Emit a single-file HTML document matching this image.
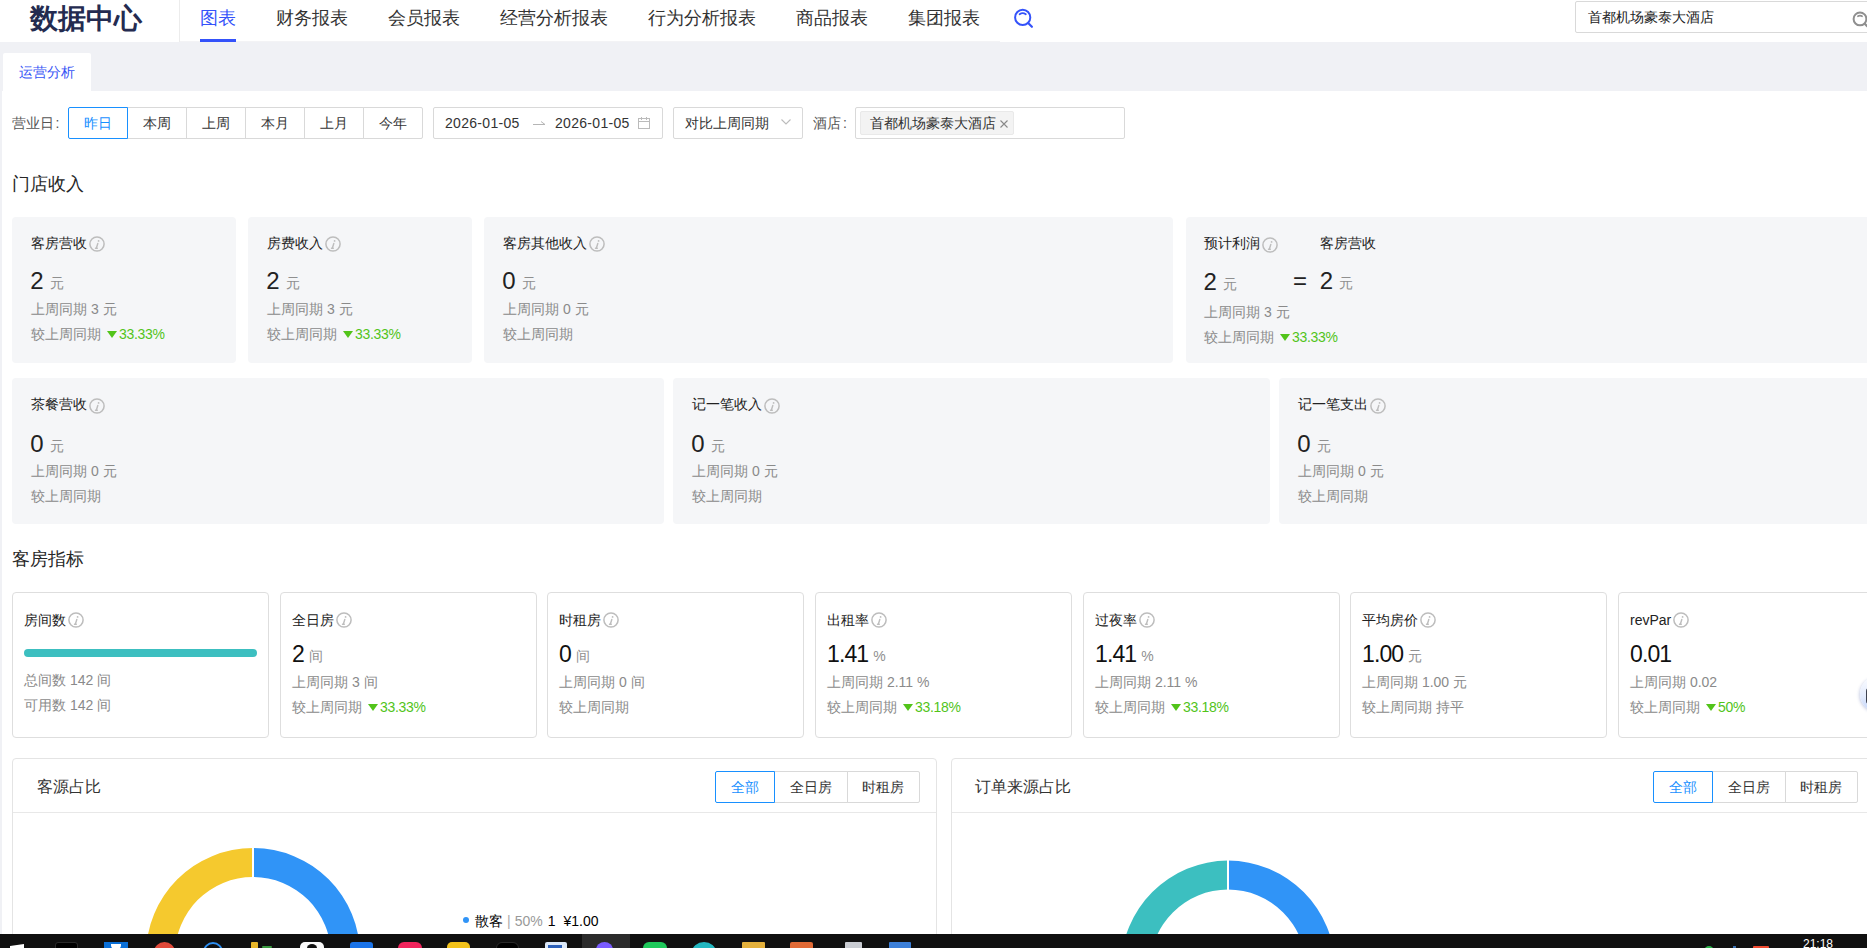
<!DOCTYPE html>
<html><head><meta charset="utf-8">
<style>
*{box-sizing:border-box}
html,body{margin:0;padding:0}
body{width:1867px;height:948px;overflow:hidden;position:relative;background:#fff;font-family:"Liberation Sans",sans-serif;color:#333}
.a{position:absolute;white-space:nowrap;line-height:1}
.nav{position:absolute;top:0;left:0;width:1867px;height:42px;background:#fff}
.logo{left:30px;top:5px;font-size:27.5px;font-weight:bold;color:#242b50}
.ni{top:8.5px;font-size:18px;color:#333}
.band{position:absolute;top:42px;left:0;width:1867px;height:49px;background:#f0f1f5}
.strip{position:absolute;top:91px;left:0;width:2px;height:843px;background:#f0f1f5}
.btns{position:absolute;height:32px;display:flex}
.btn{height:32px;border:1px solid #d9d9d9;margin-left:-1px;font-size:14px;color:#333;display:flex;align-items:center;justify-content:center;background:#fff;padding-top:2px}
.btn:first-child{margin-left:0;border-radius:2px 0 0 2px}
.btn:last-child{border-radius:0 2px 2px 0}
.btn.on{border-color:#1890ff;color:#1890ff;position:relative;z-index:1}
.box{position:absolute;border:1px solid #d9d9d9;border-radius:2px;background:#fff}
.h2{font-size:18px;color:#262626}
.card{position:absolute;background:#f5f6f8;border-radius:4px}
.bcard{position:absolute;background:#fff;border:1px solid #dedede;border-radius:4px}
.t{font-size:14px;color:#222}
.num{font-size:24px;color:#222}
.unit{font-size:14px;color:#8f8f8f;margin-left:6px;vertical-align:1px}
.sub{font-size:14px;color:#8a8a8a}
.up{color:#52c41a;letter-spacing:-0.3px}
.tri{display:inline-block;width:0;height:0;border-left:5px solid transparent;border-right:5px solid transparent;border-top:7px solid #52c41a;margin:0 2px 0 6px;vertical-align:1px}
.ii{display:inline-block;vertical-align:-3px;margin-left:2px;position:relative;top:0.8px}
.panel{position:absolute;top:758px;height:200px;border:1px solid #e4e4e4;border-radius:4px;background:#fff}
.ph{position:absolute;left:0;top:53px;width:100%;height:1px;background:#e8e8e8}
.task{position:absolute;left:0;top:934px;width:1867px;height:14px;background:#101010;overflow:hidden}
.ic{position:absolute;top:8px;height:12px;border-radius:3px}
</style></head><body>

<!-- NAV -->
<div class="nav"></div>
<div class="a logo">数据中心</div>
<div class="a" style="left:179px;top:0;width:1px;height:42px;background:#ececec"></div>
<div class="a" style="left:180px;top:41px;width:820px;height:1px;background:#f3f3f5"></div>
<div class="a ni" style="left:200px;color:#3452fa">图表</div>
<div class="a" style="left:200px;top:39px;width:36px;height:3px;background:#3452fa"></div>
<div class="a ni" style="left:276px">财务报表</div>
<div class="a ni" style="left:388px">会员报表</div>
<div class="a ni" style="left:500px">经营分析报表</div>
<div class="a ni" style="left:648px">行为分析报表</div>
<div class="a ni" style="left:796px">商品报表</div>
<div class="a ni" style="left:908px">集团报表</div>
<svg class="a" style="left:1012px;top:6px" width="24" height="24" viewBox="0 0 24 24"><circle cx="10.7" cy="11.4" r="7.6" fill="none" stroke="#3452fa" stroke-width="2"/><path d="M7.6 8.3 Q10.7 6.1 13.8 8.3" fill="none" stroke="#3452fa" stroke-width="1.8" stroke-linecap="round"/><path d="M16.4 17.3 L19.9 20.8" stroke="#3452fa" stroke-width="2.2" stroke-linecap="round"/></svg>

<div class="box" style="left:1575px;top:1px;width:310px;height:32px;border-radius:2px"></div>
<div class="a t" style="left:1588px;top:10px;color:#222">首都机场豪泰大酒店</div>
<svg class="a" style="left:1850px;top:9px" width="20" height="20" viewBox="0 0 20 20"><circle cx="10" cy="9.9" r="6.4" fill="none" stroke="#8f8f8f" stroke-width="2"/><path d="M7.3 7.6 Q10 5.7 12.7 7.6" fill="none" stroke="#8f8f8f" stroke-width="1.6"/><path d="M14.6 14.6 L19 19" stroke="#8f8f8f" stroke-width="2.2"/></svg>

<!-- BAND -->
<div class="band"></div>
<div class="a" style="left:3px;top:53px;width:88px;height:38px;background:#fff;border-radius:2px 2px 0 0"></div>
<div class="a t" style="left:19px;top:65px;color:#3352f5">运营分析</div>
<div class="strip"></div>


<!-- FILTER -->
<div class="a t" style="left:12px;top:116px;color:#555">营业日<span style="margin-left:1.5px">:</span></div>
<div class="btns" style="left:68px;top:107px">
<div class="btn on" style="width:60px">昨日</div><div class="btn" style="width:60px">本周</div><div class="btn" style="width:60px">上周</div><div class="btn" style="width:60px">本月</div><div class="btn" style="width:60px">上月</div><div class="btn" style="width:60px">今年</div>
</div>
<div class="box" style="left:433px;top:107px;width:230px;height:32px"></div>
<div class="a t" style="left:445px;top:116px;color:#333;letter-spacing:0.3px">2026-01-05</div>
<svg class="a" style="left:532px;top:119px" width="16" height="8" viewBox="0 0 16 8"><path d="M1 5.5 H13 L9 2.5" fill="none" stroke="#b5b5b5" stroke-width="1"/></svg>
<div class="a t" style="left:555px;top:116px;color:#333;letter-spacing:0.3px">2026-01-05</div>
<svg class="a" style="left:637px;top:116px" width="14" height="14" viewBox="0 0 14 14"><rect x="1.5" y="2.5" width="11" height="10" fill="none" stroke="#bbb" stroke-width="1"/><path d="M1.5 5.5H12.5M4.5 1V4M9.5 1V4" stroke="#bbb" stroke-width="1"/></svg>
<div class="box" style="left:673px;top:107px;width:130px;height:32px"></div>
<div class="a t" style="left:685px;top:116px;color:#333">对比上周同期</div>
<svg class="a" style="left:780px;top:117px" width="12" height="10" viewBox="0 0 12 10"><path d="M1.5 2.5 L6 7 L10.5 2.5" fill="none" stroke="#bbb" stroke-width="1.1"/></svg>
<div class="a t" style="left:813px;top:116px;color:#555">酒店<span style="margin-left:2px">:</span></div>
<div class="box" style="left:855px;top:107px;width:270px;height:32px"></div>
<div class="a" style="left:860px;top:111px;width:154px;height:24px;background:#f3f3f3;border:1px solid #e9e9e9;border-radius:2px"></div>
<div class="a t" style="left:870px;top:116px;color:#333">首都机场豪泰大酒店</div>
<svg class="a" style="left:999px;top:119px" width="10" height="10" viewBox="0 0 10 10"><path d="M1.5 1.5 L8.5 8.5 M8.5 1.5 L1.5 8.5" stroke="#888" stroke-width="1.1"/></svg>

<div class="a h2" style="left:12px;top:175px">门店收入</div>
<div class="a h2" style="left:12px;top:550px">客房指标</div>

<!-- ROW1 -->
<div class="card" style="left:12px;top:217px;width:224px;height:146px"></div>
<div class="a t" style="left:31px;top:235px">客房营收<svg class="ii" style="top:0.8px" width="16" height="16" viewBox="0 0 16 16"><circle cx="8" cy="8" r="7.1" fill="none" stroke="#bdbdbd" stroke-width="1.5"/><circle cx="9.6" cy="4.9" r="0.9" fill="#bdbdbd"/><path d="M8.8 7.5 L7.3 12.2 M6.5 12.3 H8.3" stroke="#bdbdbd" stroke-width="1.4" stroke-linecap="round"/></svg></div>
<div class="a num" style="left:30.2px;top:269px">2<span class="unit">元</span></div>
<div class="a sub" style="left:31px;top:302px">上周同期 3 元</div>
<div class="a sub" style="left:31px;top:327px">较上周同期<span class="tri"></span><span class="up">33.33%</span></div>
<div class="card" style="left:248px;top:217px;width:224px;height:146px"></div>
<div class="a t" style="left:267px;top:235px">房费收入<svg class="ii" style="top:0.8px" width="16" height="16" viewBox="0 0 16 16"><circle cx="8" cy="8" r="7.1" fill="none" stroke="#bdbdbd" stroke-width="1.5"/><circle cx="9.6" cy="4.9" r="0.9" fill="#bdbdbd"/><path d="M8.8 7.5 L7.3 12.2 M6.5 12.3 H8.3" stroke="#bdbdbd" stroke-width="1.4" stroke-linecap="round"/></svg></div>
<div class="a num" style="left:266.2px;top:269px">2<span class="unit">元</span></div>
<div class="a sub" style="left:267px;top:302px">上周同期 3 元</div>
<div class="a sub" style="left:267px;top:327px">较上周同期<span class="tri"></span><span class="up">33.33%</span></div>
<div class="card" style="left:484px;top:217px;width:689px;height:146px"></div>
<div class="a t" style="left:503px;top:235px">客房其他收入<svg class="ii" style="top:0.8px" width="16" height="16" viewBox="0 0 16 16"><circle cx="8" cy="8" r="7.1" fill="none" stroke="#bdbdbd" stroke-width="1.5"/><circle cx="9.6" cy="4.9" r="0.9" fill="#bdbdbd"/><path d="M8.8 7.5 L7.3 12.2 M6.5 12.3 H8.3" stroke="#bdbdbd" stroke-width="1.4" stroke-linecap="round"/></svg></div>
<div class="a num" style="left:502.2px;top:269px">0<span class="unit">元</span></div>
<div class="a sub" style="left:503px;top:302px">上周同期 0 元</div>
<div class="a sub" style="left:503px;top:327px">较上周同期</div>
<div class="card" style="left:1186px;top:217px;width:689px;height:146px"></div>
<div class="a t" style="left:1204px;top:235px">预计利润<svg class="ii" style="top:1.8px" width="16" height="16" viewBox="0 0 16 16"><circle cx="8" cy="8" r="7.1" fill="none" stroke="#bdbdbd" stroke-width="1.5"/><circle cx="9.6" cy="4.9" r="0.9" fill="#bdbdbd"/><path d="M8.8 7.5 L7.3 12.2 M6.5 12.3 H8.3" stroke="#bdbdbd" stroke-width="1.4" stroke-linecap="round"/></svg></div>
<div class="a t" style="left:1320px;top:236px">客房营收</div>
<div class="a num" style="left:1203.5px;top:270px">2<span class="unit">元</span></div>
<div class="a num" style="left:1293px;top:269px">=</div>
<div class="a num" style="left:1319.8px;top:269px">2<span class="unit">元</span></div>
<div class="a sub" style="left:1204px;top:305px">上周同期 3 元</div>
<div class="a sub" style="left:1204px;top:330px">较上周同期<span class="tri"></span><span class="up">33.33%</span></div>
<div class="card" style="left:12px;top:378px;width:652px;height:146px"></div>
<div class="a t" style="left:31px;top:395.5px">茶餐营收<svg class="ii" style="top:2.8px" width="16" height="16" viewBox="0 0 16 16"><circle cx="8" cy="8" r="7.1" fill="none" stroke="#bdbdbd" stroke-width="1.5"/><circle cx="9.6" cy="4.9" r="0.9" fill="#bdbdbd"/><path d="M8.8 7.5 L7.3 12.2 M6.5 12.3 H8.3" stroke="#bdbdbd" stroke-width="1.4" stroke-linecap="round"/></svg></div>
<div class="a num" style="left:30.2px;top:431.5px">0<span class="unit">元</span></div>
<div class="a sub" style="left:31px;top:464px">上周同期 0 元</div>
<div class="a sub" style="left:31px;top:489px">较上周同期</div>
<div class="card" style="left:673px;top:378px;width:597px;height:146px"></div>
<div class="a t" style="left:692px;top:395.5px">记一笔收入<svg class="ii" style="top:2.8px" width="16" height="16" viewBox="0 0 16 16"><circle cx="8" cy="8" r="7.1" fill="none" stroke="#bdbdbd" stroke-width="1.5"/><circle cx="9.6" cy="4.9" r="0.9" fill="#bdbdbd"/><path d="M8.8 7.5 L7.3 12.2 M6.5 12.3 H8.3" stroke="#bdbdbd" stroke-width="1.4" stroke-linecap="round"/></svg></div>
<div class="a num" style="left:691.2px;top:431.5px">0<span class="unit">元</span></div>
<div class="a sub" style="left:692px;top:464px">上周同期 0 元</div>
<div class="a sub" style="left:692px;top:489px">较上周同期</div>
<div class="card" style="left:1279px;top:378px;width:596px;height:146px"></div>
<div class="a t" style="left:1298px;top:395.5px">记一笔支出<svg class="ii" style="top:2.8px" width="16" height="16" viewBox="0 0 16 16"><circle cx="8" cy="8" r="7.1" fill="none" stroke="#bdbdbd" stroke-width="1.5"/><circle cx="9.6" cy="4.9" r="0.9" fill="#bdbdbd"/><path d="M8.8 7.5 L7.3 12.2 M6.5 12.3 H8.3" stroke="#bdbdbd" stroke-width="1.4" stroke-linecap="round"/></svg></div>
<div class="a num" style="left:1297.2px;top:431.5px">0<span class="unit">元</span></div>
<div class="a sub" style="left:1298px;top:464px">上周同期 0 元</div>
<div class="a sub" style="left:1298px;top:489px">较上周同期</div>
<div class="bcard" style="left:12px;top:592px;width:257px;height:146px"></div>
<div class="a t" style="left:24px;top:611.5px">房间数<svg class="ii" style="top:0.8px" width="16" height="16" viewBox="0 0 16 16"><circle cx="8" cy="8" r="7.1" fill="none" stroke="#bdbdbd" stroke-width="1.5"/><circle cx="9.6" cy="4.9" r="0.9" fill="#bdbdbd"/><path d="M8.8 7.5 L7.3 12.2 M6.5 12.3 H8.3" stroke="#bdbdbd" stroke-width="1.4" stroke-linecap="round"/></svg></div>
<div class="a" style="left:24px;top:649px;width:233px;height:8px;border-radius:4px;background:#3cbfc0"></div>
<div class="a sub" style="left:24px;top:673px">总间数 142 间</div>
<div class="a sub" style="left:24px;top:698px">可用数 142 间</div>
<div class="bcard" style="left:280px;top:592px;width:257px;height:146px"></div>
<div class="a t" style="left:292px;top:611.5px">全日房<svg class="ii" style="top:0.8px" width="16" height="16" viewBox="0 0 16 16"><circle cx="8" cy="8" r="7.1" fill="none" stroke="#bdbdbd" stroke-width="1.5"/><circle cx="9.6" cy="4.9" r="0.9" fill="#bdbdbd"/><path d="M8.8 7.5 L7.3 12.2 M6.5 12.3 H8.3" stroke="#bdbdbd" stroke-width="1.4" stroke-linecap="round"/></svg></div>
<div class="a num" style="left:292px;top:642.5px;font-size:23px;color:#111;letter-spacing:-0.9px">2<span class="unit" style="margin-left:5px;letter-spacing:0">间</span></div>
<div class="a sub" style="left:292px;top:675px">上周同期 3 间</div>
<div class="a sub" style="left:292px;top:700px">较上周同期<span class="tri"></span><span class="up">33.33%</span></div>
<div class="bcard" style="left:547px;top:592px;width:257px;height:146px"></div>
<div class="a t" style="left:559px;top:611.5px">时租房<svg class="ii" style="top:0.8px" width="16" height="16" viewBox="0 0 16 16"><circle cx="8" cy="8" r="7.1" fill="none" stroke="#bdbdbd" stroke-width="1.5"/><circle cx="9.6" cy="4.9" r="0.9" fill="#bdbdbd"/><path d="M8.8 7.5 L7.3 12.2 M6.5 12.3 H8.3" stroke="#bdbdbd" stroke-width="1.4" stroke-linecap="round"/></svg></div>
<div class="a num" style="left:559px;top:642.5px;font-size:23px;color:#111;letter-spacing:-0.9px">0<span class="unit" style="margin-left:5px;letter-spacing:0">间</span></div>
<div class="a sub" style="left:559px;top:675px">上周同期 0 间</div>
<div class="a sub" style="left:559px;top:700px">较上周同期</div>
<div class="bcard" style="left:815px;top:592px;width:257px;height:146px"></div>
<div class="a t" style="left:827px;top:611.5px">出租率<svg class="ii" style="top:0.8px" width="16" height="16" viewBox="0 0 16 16"><circle cx="8" cy="8" r="7.1" fill="none" stroke="#bdbdbd" stroke-width="1.5"/><circle cx="9.6" cy="4.9" r="0.9" fill="#bdbdbd"/><path d="M8.8 7.5 L7.3 12.2 M6.5 12.3 H8.3" stroke="#bdbdbd" stroke-width="1.4" stroke-linecap="round"/></svg></div>
<div class="a num" style="left:827px;top:642.5px;font-size:23px;color:#111;letter-spacing:-0.9px">1.41<span class="unit" style="margin-left:5px;letter-spacing:0">%</span></div>
<div class="a sub" style="left:827px;top:675px">上周同期 2.11 %</div>
<div class="a sub" style="left:827px;top:700px">较上周同期<span class="tri"></span><span class="up">33.18%</span></div>
<div class="bcard" style="left:1083px;top:592px;width:257px;height:146px"></div>
<div class="a t" style="left:1095px;top:611.5px">过夜率<svg class="ii" style="top:0.8px" width="16" height="16" viewBox="0 0 16 16"><circle cx="8" cy="8" r="7.1" fill="none" stroke="#bdbdbd" stroke-width="1.5"/><circle cx="9.6" cy="4.9" r="0.9" fill="#bdbdbd"/><path d="M8.8 7.5 L7.3 12.2 M6.5 12.3 H8.3" stroke="#bdbdbd" stroke-width="1.4" stroke-linecap="round"/></svg></div>
<div class="a num" style="left:1095px;top:642.5px;font-size:23px;color:#111;letter-spacing:-0.9px">1.41<span class="unit" style="margin-left:5px;letter-spacing:0">%</span></div>
<div class="a sub" style="left:1095px;top:675px">上周同期 2.11 %</div>
<div class="a sub" style="left:1095px;top:700px">较上周同期<span class="tri"></span><span class="up">33.18%</span></div>
<div class="bcard" style="left:1350px;top:592px;width:257px;height:146px"></div>
<div class="a t" style="left:1362px;top:611.5px">平均房价<svg class="ii" style="top:0.8px" width="16" height="16" viewBox="0 0 16 16"><circle cx="8" cy="8" r="7.1" fill="none" stroke="#bdbdbd" stroke-width="1.5"/><circle cx="9.6" cy="4.9" r="0.9" fill="#bdbdbd"/><path d="M8.8 7.5 L7.3 12.2 M6.5 12.3 H8.3" stroke="#bdbdbd" stroke-width="1.4" stroke-linecap="round"/></svg></div>
<div class="a num" style="left:1362px;top:642.5px;font-size:23px;color:#111;letter-spacing:-0.9px">1.00<span class="unit" style="margin-left:5px;letter-spacing:0">元</span></div>
<div class="a sub" style="left:1362px;top:675px">上周同期 1.00 元</div>
<div class="a sub" style="left:1362px;top:700px">较上周同期 持平</div>
<div class="bcard" style="left:1618px;top:592px;width:257px;height:146px"></div>
<div class="a t" style="left:1630px;top:611.5px">revPar<svg class="ii" style="top:0.8px" width="16" height="16" viewBox="0 0 16 16"><circle cx="8" cy="8" r="7.1" fill="none" stroke="#bdbdbd" stroke-width="1.5"/><circle cx="9.6" cy="4.9" r="0.9" fill="#bdbdbd"/><path d="M8.8 7.5 L7.3 12.2 M6.5 12.3 H8.3" stroke="#bdbdbd" stroke-width="1.4" stroke-linecap="round"/></svg></div>
<div class="a num" style="left:1630px;top:642.5px;font-size:23px;color:#111;letter-spacing:-0.9px">0.01</div>
<div class="a sub" style="left:1630px;top:675px">上周同期 0.02</div>
<div class="a sub" style="left:1630px;top:700px">较上周同期<span class="tri"></span><span class="up">50%</span></div>
<!-- CHARTS -->
<div class="panel" style="left:12px;width:925px"><div class="ph"></div></div>
<div class="a" style="left:37px;top:779px;font-size:16px;color:#333">客源占比</div>
<div class="btns" style="left:715px;top:771px">
<div class="btn on" style="width:60px">全部</div><div class="btn" style="width:73.5px">全日房</div><div class="btn" style="width:73.5px">时租房</div>
</div>

<svg class="a" style="left:0;top:812px" width="940" height="122" viewBox="0 812 940 122">
<path d="M253 848 A107 107 0 0 1 360 955 L331 955 A78 78 0 0 0 253 877 Z" fill="#3094f7"/>
<path d="M253 848 A107 107 0 0 0 146 955 L175 955 A78 78 0 0 1 253 877 Z" fill="#f5c92e"/>
<rect x="252" y="845" width="2" height="34" fill="#fff"/>
</svg>
<div class="a" style="left:463px;top:917px;width:6px;height:6px;border-radius:50%;background:#3094f7"></div>
<div class="a" style="left:475px;top:914px;font-size:14px;color:#000">散客<span style="color:#aaa;margin-left:4px">|</span><span style="color:#999;margin-left:4px">50%</span><span style="margin-left:5px">1</span><span style="margin-left:8px">¥1.00</span></div>
<div class="panel" style="left:950.5px;width:925px"><div class="ph"></div></div>
<div class="a" style="left:975px;top:779px;font-size:16px;color:#333">订单来源占比</div>
<div class="btns" style="left:1653px;top:771px">
<div class="btn on" style="width:60px">全部</div><div class="btn" style="width:73.5px">全日房</div><div class="btn" style="width:73.5px">时租房</div>
</div>

<svg class="a" style="left:940px;top:812px" width="400" height="122" viewBox="940 812 400 122">
<path d="M1228 860.6 A107 107 0 0 1 1335 967.6 L1306 967.6 A78 78 0 0 0 1228 889.6 Z" fill="#3094f7"/>
<path d="M1228 860.6 A107 107 0 0 0 1121 967.6 L1150 967.6 A78 78 0 0 1 1228 889.6 Z" fill="#3cbfc0"/>
<rect x="1227" y="857" width="2" height="34" fill="#fff"/>
</svg>
<!-- floating -->
<div class="a" style="left:1859.5px;top:676px;width:36px;height:36px;border-radius:50%;background:linear-gradient(180deg,#fbfcff 0%,#e4ecfd 55%,#c3d4f9 100%);box-shadow:-1px 1px 3px rgba(60,80,160,.25)"></div>
<div class="a" style="left:1865.7px;top:688px;width:6px;height:15.5px;border-radius:3px 0 0 3px;background:linear-gradient(90deg,#3a3f4d,#6a6f7a)"></div>
<!-- TASKBAR -->
<div class="task">
<div class="ic" style="left:10px;top:11px;width:14px;height:6px;background:#fff;border-radius:0;transform:skewY(-8deg)"></div>
<div class="ic" style="left:55px;width:23px;background:#000;border:1px solid #2a2a2a"></div>
<div class="ic" style="left:104px;width:24px;background:#0a6fd6;border-radius:0"></div>
<div class="ic" style="left:111px;top:10px;width:10px;height:5px;background:#fff;border-radius:0 0 4px 4px"></div>
<div class="ic" style="left:154px;width:21px;background:#e04a3a;border-radius:50%;height:20px"></div>
<div class="ic" style="left:203px;width:20px;height:20px;border:2px solid #2d8ef0;background:transparent;border-radius:50%"></div>
<div class="ic" style="left:251px;width:7px;background:#e8b62a;border-radius:1px"></div>
<div class="ic" style="left:262px;width:10px;height:2px;top:12px;background:#3a9a40"></div>
<div class="ic" style="left:300px;width:24px;background:#fafafa;border-radius:5px"></div>
<div class="ic" style="left:307px;top:10px;width:10px;height:8px;background:#111;border-radius:50%"></div>
<div class="ic" style="left:350px;width:23px;background:#1a73e8"></div>
<div class="ic" style="left:398px;width:24px;background:#f0245c;border-radius:6px"></div>
<div class="ic" style="left:447px;width:23px;background:#f2c21b;border-radius:5px"></div>
<div class="ic" style="left:496px;width:23px;background:#000;border:1px solid #2a2a2a;border-radius:6px"></div>
<div class="ic" style="left:545px;width:22px;background:#dce8f8;border-radius:2px"></div>
<div class="ic" style="left:548px;top:11px;width:14px;height:4px;background:#2b5fb8;border-radius:0"></div>
<div class="ic" style="left:582px;top:0;width:48px;height:14px;background:#2b2b2b;border-radius:0"></div>
<div class="ic" style="left:596px;width:17px;height:16px;background:#7a5cff;border-radius:50%"></div>
<div class="ic" style="left:643px;width:24px;background:#1ec85a;border-radius:6px"></div>
<div class="ic" style="left:692px;width:24px;height:20px;background:#23b7c0;border-radius:50%"></div>
<div class="ic" style="left:742px;width:23px;background:#e3b03c;border-radius:1px"></div>
<div class="ic" style="left:790px;width:23px;background:#e06a36;border-radius:2px"></div>
<div class="ic" style="left:845px;width:17px;background:#c9ccd2;border-radius:1px"></div>
<div class="ic" style="left:889px;width:22px;background:#3c7fd8;border-radius:1px"></div>
<div class="ic" style="left:1704px;top:12px;width:10px;height:10px;background:#2bb34a;border-radius:50%"></div>
<div class="ic" style="left:1733px;top:12px;width:3px;height:4px;background:#3a6fb0;border-radius:0"></div>
<div class="ic" style="left:1753px;top:12px;width:16px;height:6px;background:#fff;border-top:2px solid #f04a30;border-radius:1px"></div>
<div class="a" style="left:1803px;top:4px;font-size:12px;color:#fff">21:18</div>
</div>

</body></html>
